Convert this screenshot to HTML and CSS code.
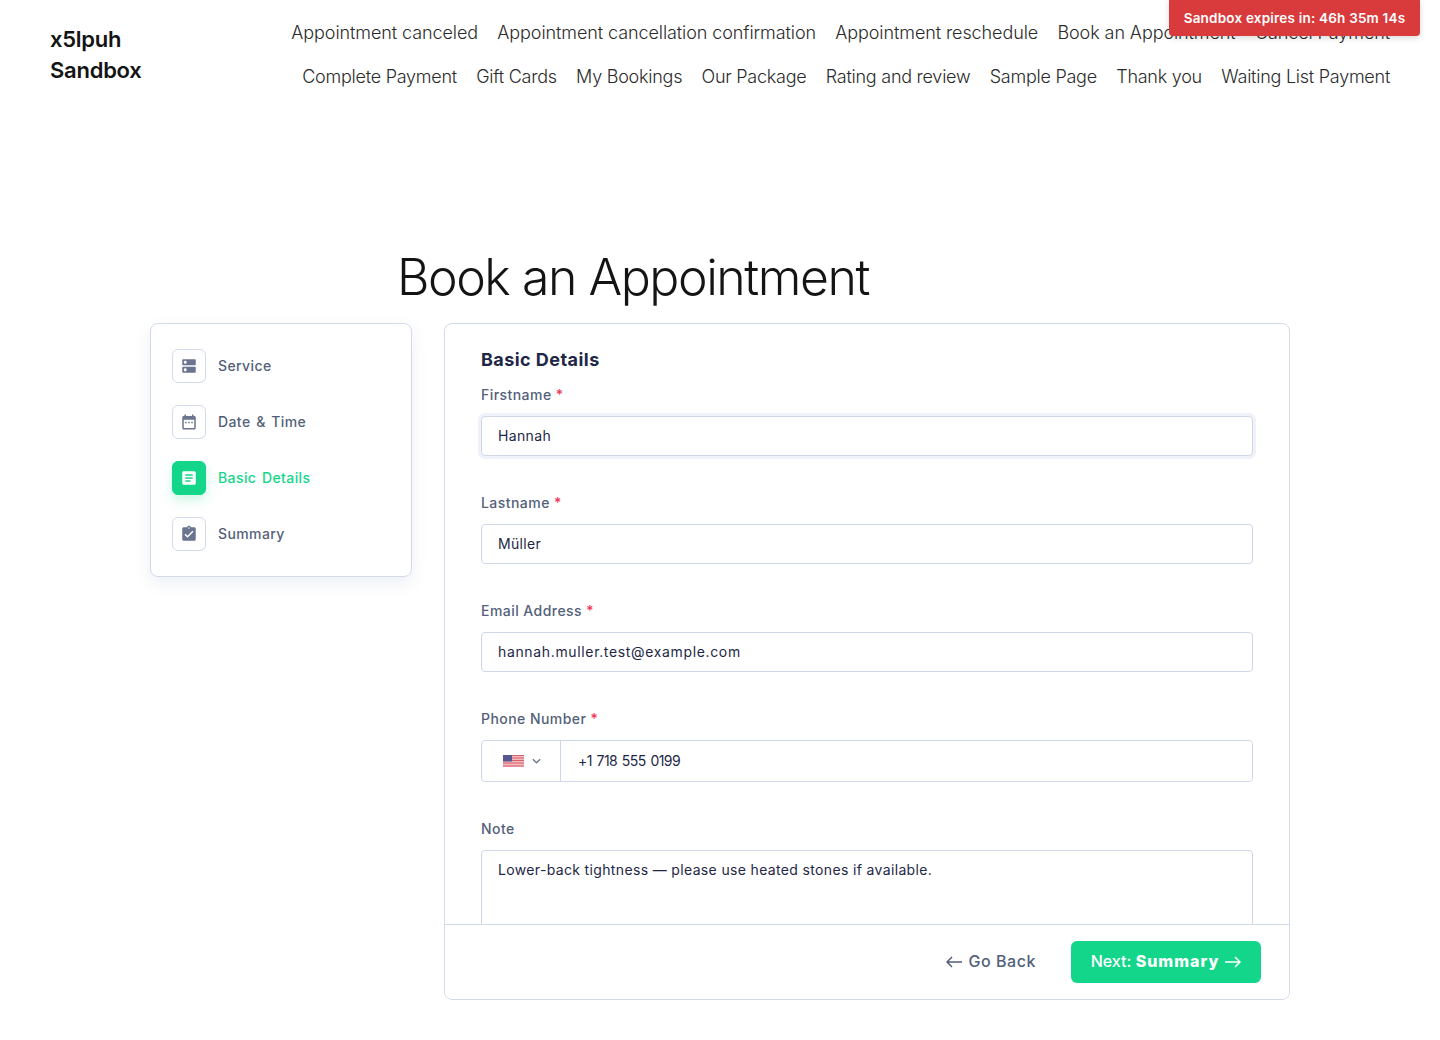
FILE: index.html
```html
<!DOCTYPE html>
<html lang="en">
<head>
  <meta charset="UTF-8">
  <meta name="viewport" content="width=device-width, initial-scale=1.0">
  <title>Book an Appointment</title>
  <link rel="stylesheet" href="styles.css">
</head>
<body>
  <div class="expires">Sandbox expires in: 46h 35m 14s</div>

  <header class="site-header">
    <a class="logo" href="#">x5lpuh<br>Sandbox</a>
    <nav class="site-nav">
      <a href="#">Appointment canceled</a>
      <a href="#">Appointment cancellation confirmation</a>
      <a href="#">Appointment reschedule</a>
      <a href="#">Book an Appointment</a>
      <a href="#">Cancel Payment</a>
      <a href="#">Complete Payment</a>
      <a href="#">Gift Cards</a>
      <a href="#">My Bookings</a>
      <a href="#">Our Package</a>
      <a href="#">Rating and review</a>
      <a href="#">Sample Page</a>
      <a href="#">Thank you</a>
      <a href="#">Waiting List Payment</a>
    </nav>
  </header>

  <h1 class="page-title">Book an Appointment</h1>

  <main class="booking">
    <!-- steps -->
    <aside class="steps">
      <div class="step">
        <span class="step-icon">
          <svg viewBox="0 0 24 24"><path d="M20 13H4c-.55 0-1 .45-1 1v6c0 .55.45 1 1 1h16c.55 0 1-.45 1-1v-6c0-.55-.45-1-1-1zM7 19c-1.1 0-2-.9-2-2s.9-2 2-2 2 .9 2 2-.9 2-2 2zM20 3H4c-.55 0-1 .45-1 1v6c0 .55.45 1 1 1h16c.55 0 1-.45 1-1V4c0-.55-.45-1-1-1zM7 9c-1.1 0-2-.9-2-2s.9-2 2-2 2 .9 2 2-.9 2-2 2z"/></svg>
        </span>
        <span class="step-label">Service</span>
      </div>
      <div class="step">
        <span class="step-icon">
          <svg viewBox="0 0 24 24"><path d="M19 4h-1V2h-2v2H8V2H6v2H5c-1.1 0-2 .9-2 2v14c0 1.1.9 2 2 2h14c1.1 0 2-.9 2-2V6c0-1.1-.9-2-2-2zm0 16H5V9h14v11z"/><path d="M7 11.500h2v2H7zM11 11.500h2v2h-2zM15 11.500h2v2h-2z"/></svg>
        </span>
        <span class="step-label">Date &amp; Time</span>
      </div>
      <div class="step active">
        <span class="step-icon">
          <svg viewBox="0 0 24 24"><path d="M19 3H5c-1.1 0-2 .9-2 2v14c0 1.1.9 2 2 2h14c1.1 0 2-.9 2-2V5c0-1.1-.9-2-2-2zm-5 14H7v-2h7v2zm3-4H7v-2h10v2zm0-4H7V7h10v2z"/></svg>
        </span>
        <span class="step-label">Basic Details</span>
      </div>
      <div class="step">
        <span class="step-icon">
          <svg viewBox="0 0 24 24"><path d="M19 3h-4.180C14.400 1.840 13.300 1 12 1c-1.300 0-2.400.84-2.820 2H5c-1.100 0-2 .9-2 2v14c0 1.100.9 2 2 2h14c1.100 0 2-.9 2-2V5c0-1.100-.9-2-2-2zm-7 0c.55 0 1 .45 1 1s-.45 1-1 1-1-.45-1-1 .45-1 1-1zm-2 14l-4-4 1.410-1.410L10 14.170l6.590-6.590L18 9l-8 8z"/></svg>
        </span>
        <span class="step-label">Summary</span>
      </div>
    </aside>

    <!-- form panel -->
    <section class="panel">
      <form class="details-form">
        <h2>Basic Details</h2>

        <div class="field">
          <label for="firstname">Firstname <span class="req">*</span></label>
          <input class="focused" type="text" id="firstname" value="Hannah">
        </div>
        <div class="field">
          <label for="lastname">Lastname <span class="req">*</span></label>
          <input type="text" id="lastname" value="Müller">
        </div>
        <div class="field">
          <label for="email">Email Address <span class="req">*</span></label>
          <input type="text" id="email" value="hannah.muller.test@example.com">
        </div>
        <div class="field">
          <label for="phone">Phone Number <span class="req">*</span></label>
          <div class="phone-input">
            <span class="country">
              <svg class="flag" viewBox="0 0 21 12">
                <rect width="21" height="12" fill="#f3b9bd"/>
                <path d="M0 .5h21M0 3h21M0 5.500h21M0 8h21M0 11h21" stroke="#d8606a" stroke-width="1"/>
                <rect width="9" height="6.500" fill="#56598f"/>
              </svg>
              <svg class="chevron" viewBox="0 0 10 6"><path d="M1 1l4 4 4-4"/></svg>
            </span>
            <input type="text" id="phone" value="+1 718 555 0199">
          </div>
        </div>
        <div class="field">
          <label for="note">Note</label>
          <textarea id="note" rows="4">Lower-back tightness — please use heated stones if available.</textarea>
        </div>
      </form>

      <footer class="panel-footer">
        <button class="back-btn" type="button">
          <svg viewBox="0 0 16 12"><path d="M16 6H1M6 1L1 6l5 5"/></svg>
          Go Back
        </button>
        <button class="next-btn" type="button">
          Next:&nbsp;<b>Summary</b>
          <svg viewBox="0 0 16 12"><path d="M0 6h15M10 1l5 5-5 5"/></svg>
        </button>
      </footer>
    </section>
  </main>
</body>
</html>
```

FILE: styles.css
```css
* {
  box-sizing: border-box;
}
body {
  margin: 0;
  height: 1040px;
  overflow: hidden;
  background-color: #fff;
  font-family: "Inter", "Noto Sans", sans-serif;
  color: #1e2746;
}
a {
  color: inherit;
  text-decoration: none;
}

/* Sandbox badge */
.expires {
  position: absolute;
  top: 0;
  right: 20px;
  width: 251px;
  height: 36px;
  line-height: 36px;
  text-align: center;
  background-color: #d93a3c;
  color: #fff;
  font-size: 13.5px;
  font-weight: 600;
  letter-spacing: 0.2px;
  border-radius: 0 0 4px 4px;
  box-shadow: 0 2px 6px rgba(0, 0, 0, 0.15);
}

/* Header */
.site-header {
  display: flex;
  justify-content: space-between;
  padding: 11px 50px 0;
  height: 111px;
}
.logo {
  flex: none;
  margin-top: 13px;
  font-size: 22px;
  font-weight: 600;
  line-height: 31px;
  letter-spacing: -0.25px;
  color: #141414;
}
.site-nav {
  width: 1120px;
  display: flex;
  flex-wrap: wrap;
  justify-content: flex-end;
  align-content: flex-start;
  column-gap: 19.300px;
}
.site-nav a {
  font-size: 18px;
  font-weight: 300;
  line-height: 44px;
  letter-spacing: -0.09px;
  color: #2b2b2b;
}
.site-nav a:nth-child(n+6) {
  letter-spacing: -0.25px;
}

.page-title {
  margin: 125px 0 0 397px;
  height: 87px;
  font-size: 50px;
  font-weight: 300;
  line-height: 82px;
  letter-spacing: -1.46px;
  color: #141414;
}

/* Booking layout */
.booking {
  display: flex;
  align-items: flex-start;
  gap: 32px;
  width: 1140px;
  margin: 0 auto;
}

.steps {
  flex: none;
  width: 262px;
  height: 254px;
  padding: 25px 21px;
  display: flex;
  flex-direction: column;
  gap: 22px;
  background-color: #fff;
  border: 1px solid #d3daea;
  border-radius: 8px;
  box-shadow: 0 6px 16px rgba(80, 100, 150, 0.1);
}
.step {
  display: flex;
  align-items: center;
  gap: 12px;
  height: 34px;
  font-size: 14px;
  font-weight: 500;
  letter-spacing: 0.4px;
  word-spacing: 1.500px;
  color: #535f7a;
}
.step-label {
  margin-top: -2px;
}
.step-icon {
  width: 34px;
  height: 34px;
  display: flex;
  align-items: center;
  justify-content: center;
  border: 1px solid #d3daea;
  border-radius: 6px;
}
.step-icon svg {
  width: 18px;
  height: 18px;
  fill: #6b7590;
}
.step.active {
  color: #14d68a;
}
.step.active .step-icon {
  background-color: #14d68a;
  border-color: #14d68a;
  box-shadow: 0 5px 12px rgba(20, 214, 138, 0.22);
}
.step.active .step-icon svg {
  fill: #fff;
}

/* Form panel */
.panel {
  flex: 1;
  height: 677px;
  display: flex;
  flex-direction: column;
  background-color: #fff;
  border: 1px solid #d3daea;
  border-radius: 8px;
  overflow: hidden;
}
.details-form {
  height: 600px;
  flex: none;
  padding: 0 36px;
  overflow: hidden;
}
.details-form h2 {
  margin: 23px 0 11px;
  height: 26px;
  font-size: 18px;
  font-weight: 700;
  line-height: 26px;
  letter-spacing: 0.45px;
  color: #1e2746;
}
.field {
  margin-bottom: 36px;
}
.field label {
  display: block;
  height: 22px;
  margin-bottom: 10px;
  font-size: 14px;
  font-weight: 500;
  line-height: 22px;
  letter-spacing: 0.45px;
  color: #535f7a;
}
.req {
  color: #f0355a;
}
.field input,
.field textarea {
  display: block;
  width: 100%;
  height: 40px;
  padding: 0 16px 2px;
  font-family: inherit;
  font-size: 14px;
  letter-spacing: 0.35px;
  color: #1e2746;
  background-color: #fff;
  border: 1px solid #ced6e8;
  border-radius: 4px;
  outline: none;
}
.field input.focused {
  box-shadow: 0 0 0 3px #f0f2f9;
}
.field #email {
  letter-spacing: 0.65px;
}
.field textarea {
  height: 120px;
  padding: 9px 16px;
  line-height: 20px;
  resize: none;
}
.phone-input {
  display: flex;
  height: 42px;
  border: 1px solid #ced6e8;
  border-radius: 4px;
}
.field .phone-input input {
  flex: 1;
  height: 40px;
  border: none;
  padding-left: 17px;
  letter-spacing: -0.55px;
  word-spacing: 1.300px;
}
.country {
  flex: none;
  width: 79px;
  display: flex;
  align-items: center;
  padding-left: 21px;
  gap: 8px;
  border-right: 1px solid #ced6e8;
}
.flag {
  width: 21px;
  height: 12px;
}
.chevron {
  width: 9px;
  height: 6px;
  fill: none;
  stroke: #6b7590;
  stroke-width: 1.400;
}

/* Footer buttons */
.panel-footer {
  flex: 1;
  display: flex;
  align-items: flex-start;
  justify-content: flex-end;
  gap: 35px;
  padding: 16px 28px 0 0;
  background-color: #fff;
  border-top: 1px solid #d3daea;
}
.panel-footer button {
  display: flex;
  align-items: center;
  height: 42px;
  padding: 0 0 2px;
  border: none;
  border-radius: 6px;
  font-family: inherit;
  font-size: 16px;
  font-weight: 500;
  letter-spacing: 0.55px;
  cursor: pointer;
}
.panel-footer svg {
  width: 16px;
  height: 12px;
  margin-top: 2px;
  fill: none;
  stroke: currentColor;
  stroke-width: 1.500;
}
.back-btn {
  gap: 6px;
  background: none;
  color: #535f7a;
}
.panel-footer .next-btn {
  width: 190px;
  justify-content: center;
  background-color: #14d68a;
  color: #fff;
  letter-spacing: 0;
}
.next-btn b {
  font-weight: 800;
  letter-spacing: 1px;
}
.next-btn svg {
  margin-left: 6px;
}
```
